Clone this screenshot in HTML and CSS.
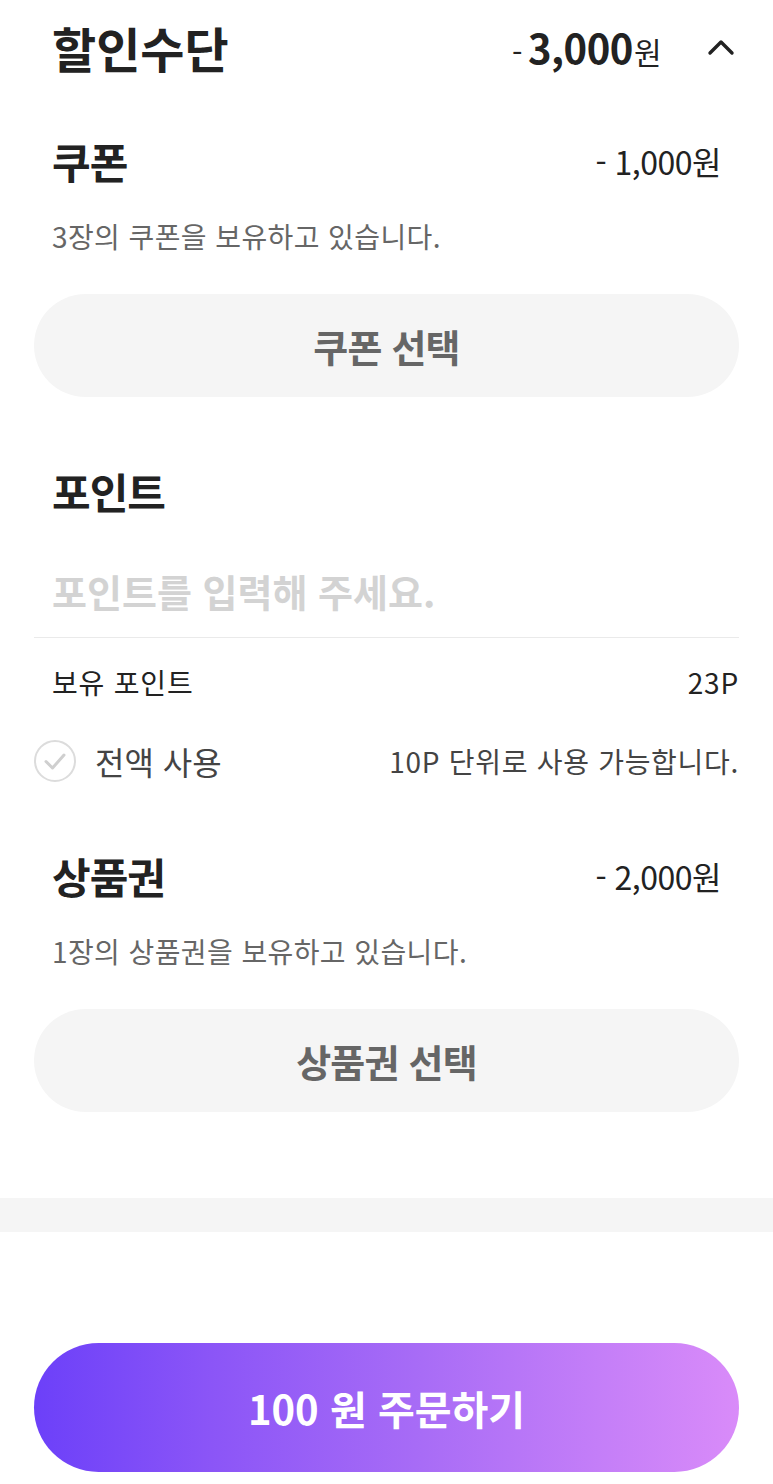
FILE: index.html
```html
<!DOCTYPE html>
<html lang="ko">
<head>
    <meta charset="UTF-8">
    <meta name="viewport" content="width=device-width, initial-scale=1.0">
    <title>할인수단</title>
    <link rel="stylesheet" href="styles.css">
</head>
<body>
<div class="wrap">
    <div class="summary">
        <h1 class="summary-title">할인수단</h1>
        <div class="summary-total">
            <span class="minus">-</span><b>3,000</b><span class="won">원</span>
        </div>
        <svg class="chevron" width="28" height="18" viewBox="0 0 28 18">
            <path d="M3 15 L14 4 L25 15" fill="none" stroke="#222" stroke-width="3.4" stroke-linecap="round" stroke-linejoin="round"/>
        </svg>
    </div>

    <!-- coupon -->
    <div class="group-head">
        <h2>쿠폰</h2>
        <span class="discount">- 1,000원</span>
    </div>
    <p class="desc">3장의 쿠폰을 보유하고 있습니다.</p>
    <button type="button" class="pick">쿠폰 선택</button>

    <!-- point -->
    <div class="group-head point-head">
        <h2>포인트</h2>
    </div>
    <input class="point-input" type="text" placeholder="포인트를 입력해 주세요.">
    <div class="point-row">
        <span>보유 포인트</span>
        <span>23P</span>
    </div>
    <div class="check-row">
        <label class="check">
            <svg width="44" height="44" viewBox="0 0 44 44">
                <circle cx="22" cy="22" r="20" fill="#fff" stroke="#dcdcdc" stroke-width="2"/>
                <path d="M13 22.5 L19.5 29 L31 16" fill="none" stroke="#cfcfcf" stroke-width="3" stroke-linecap="round" stroke-linejoin="round"/>
            </svg>
            <span>전액 사용</span>
        </label>
        <span class="unit">10P 단위로 사용 가능합니다.</span>
    </div>

    <!-- voucher -->
    <div class="group-head voucher-head">
        <h2>상품권</h2>
        <span class="discount">- 2,000원</span>
    </div>
    <p class="desc">1장의 상품권을 보유하고 있습니다.</p>
    <button type="button" class="pick">상품권 선택</button>
</div>

<div class="band"></div>

<div class="order">
    <button type="button" class="order-btn">100 원 주문하기</button>
</div>
</body>
</html>
```

FILE: styles.css
```css
body{
    margin: 0;
    background: #fff;
    color: #222;
    font-family: "Noto Sans CJK KR", "Noto Sans", sans-serif;
}
.wrap{
    padding: 0 34px;
}
h1, h2, p{
    margin: 0;
}

.summary{
    height: 94px;
    display: flex;
    align-items: center;
    padding: 0 4px 0 18px;
}
.summary-title{
    flex: 1;
    font-size: 48px;
    font-weight: 700;
    letter-spacing: 0;
    line-height: 1;
}
.summary-total{
    display: flex;
    align-items: baseline;
    margin-right: 46px;
    letter-spacing: -0.5px;
}
.summary-total .minus{
    font-size: 30px;
    margin-right: 6px;
}
.summary-total b{
    font-size: 40px;
    font-weight: 700;
}
.summary-total .won{
    font-size: 30px;
    margin-left: 1px;
}
.chevron{
    display: block;
}

.group-head{
    margin-top: 42px;
    height: 50px;
    display: flex;
    align-items: center;
    justify-content: space-between;
    padding: 0 18px;
}
.group-head h2{
    font-size: 42px;
    font-weight: 700;
    letter-spacing: -1px;
    line-height: 1;
}
.discount{
    font-size: 32px;
    letter-spacing: -0.5px;
}
.point-head{
    margin-top: 69px;
}
.voucher-head{
    margin-top: 68px;
}

.desc{
    margin-top: 30px;
    padding: 0 18px;
    line-height: 40px;
    font-size: 28px;
    color: #666;
    letter-spacing: 0.4px;
}
.pick{
    display: block;
    width: 100%;
    height: 103px;
    margin-top: 38px;
    border: 0;
    border-radius: 52px;
    background: #f5f5f5;
    color: #666;
    font-family: inherit;
    font-size: 38px;
    font-weight: 700;
    letter-spacing: -0.8px;
    cursor: pointer;
}

.point-input{
    display: block;
    box-sizing: border-box;
    width: 100%;
    margin-top: 49px;
    padding: 0 18px 22px;
    height: 73px;
    border: 0;
    border-bottom: 1px solid #eaeaea;
    outline: none;
    font-family: inherit;
    font-size: 38px;
    font-weight: 700;
    letter-spacing: 0;
    line-height: 50px;
    color: #222;
}
.point-input::placeholder{
    color: #d3d3d3;
}
.point-row{
    margin-top: 24px;
    height: 40px;
    display: flex;
    align-items: center;
    justify-content: space-between;
    padding-left: 18px;
    font-size: 28px;
    letter-spacing: 0.8px;
    color: #222;
}
.check-row{
    margin-top: 37px;
    height: 44px;
    display: flex;
    align-items: center;
    justify-content: space-between;
    color: #444;
}
.check{
    display: flex;
    align-items: center;
    gap: 18px;
    font-size: 32px;
    letter-spacing: 0;
}
.check svg{
    display: block;
    margin-left: -1px;
}
.unit{
    font-size: 28px;
    letter-spacing: 0.7px;
}

.band{
    margin-top: 86px;
    height: 34px;
    background: #f5f5f5;
}
.order{
    padding: 111px 34px 0;
}
.order-btn{
    display: block;
    width: 100%;
    height: 129px;
    border: 0;
    border-radius: 65px;
    background: linear-gradient(90deg, #6c40f9 0%, #8b55f7 25%, #a86cf6 55%, #c47ef8 80%, #d98bf9 100%);
    color: #fff;
    font-family: inherit;
    font-size: 40px;
    font-weight: 700;
    letter-spacing: 0;
    cursor: pointer;
}
```
